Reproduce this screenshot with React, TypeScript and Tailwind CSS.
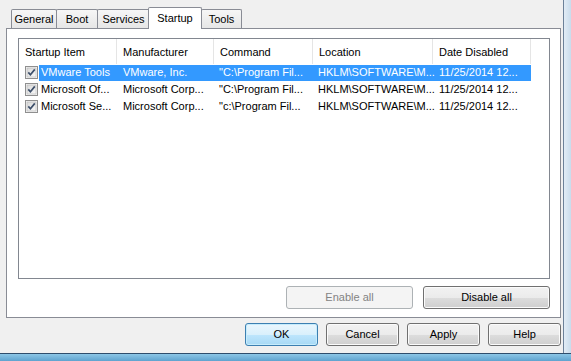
import React from "react";

const columns = [
  { title: "Startup Item", width: 98 },
  { title: "Manufacturer", width: 97 },
  { title: "Command", width: 99 },
  { title: "Location", width: 120 },
  { title: "Date Disabled", width: 98 },
];

const items = [
  {
    name: "VMware Tools",
    maker: "VMware, Inc.",
    command: '"C:\\Program Fil...',
    location: "HKLM\\SOFTWARE\\M...",
    date: "11/25/2014 12...",
    selected: true,
  },
  {
    name: "Microsoft Of...",
    maker: "Microsoft Corp...",
    command: '"C:\\Program Fil...',
    location: "HKLM\\SOFTWARE\\M...",
    date: "11/25/2014 12...",
    selected: false,
  },
  {
    name: "Microsoft Se...",
    maker: "Microsoft Corp...",
    command: '"c:\\Program Fil...',
    location: "HKLM\\SOFTWARE\\M...",
    date: "11/25/2014 12...",
    selected: false,
  },
];

function CheckBox() {
  return (
    <svg width="13" height="13" viewBox="0 0 13 13">
      <defs>
        <linearGradient id="cbg" x1="0" y1="0" x2="1" y2="1">
          <stop offset="0" stopColor="#d8d8d8" />
          <stop offset="1" stopColor="#fafafa" />
        </linearGradient>
      </defs>
      <rect x="0.5" y="0.5" width="12" height="12" fill="#f4f4f4" stroke="#8f8f8f" />
      <rect x="2" y="2" width="9" height="9" fill="url(#cbg)" stroke="#b5b5b5" strokeWidth="0.6" />
      <path d="M3.3 6.4 L5.4 8.8 L9.8 3.4" fill="none" stroke="#3d4f6a" strokeWidth="1.7" />
    </svg>
  );
}

function Tab({ label, width, selected, first }: { label: string; width: number; selected?: boolean; first?: boolean }) {
  if (selected) {
    return (
      <div
        style={{ width }}
        className="relative z-10 -mb-px -ml-[2px] flex h-[22px] items-center justify-center rounded-t-[2px] border border-b-0 border-[#898c95] bg-white pb-[1px]"
      >
        {label}
      </div>
    );
  }
  return (
    <div
      style={{ width }}
      className={`flex h-[19px] items-center justify-center rounded-t-[2px] border border-b-0 border-[#898c95] bg-[linear-gradient(#f6f6f6,#e6e6e6)] pt-[1px] ${
        first ? "" : "-ml-px"
      }`}
    >
      {label}
    </div>
  );
}

function WinButton({
  children,
  width,
  variant = "normal",
}: {
  children: React.ReactNode;
  width: number;
  variant?: "normal" | "default" | "disabled";
}) {
  const styles = {
    normal:
      "border-[#707070] bg-[linear-gradient(#f2f2f2_0%,#ebebeb_50%,#dddddd_50%,#cfcfcf_100%)] shadow-[inset_0_0_0_1px_#fbfbfb] text-black",
    default:
      "border-[#3c7fb1] bg-[linear-gradient(#eaf6fd_0%,#d9f0fc_50%,#bee6fd_50%,#a7d9f5_100%)] shadow-[inset_0_0_0_1px_#c6ecfc] text-black",
    disabled: "border-[#adb2b5] bg-[#f4f4f4] text-[#838383]",
  };
  return (
    <div
      style={{ width }}
      className={`flex h-[23px] items-center justify-center rounded-[3px] border ${styles[variant]}`}
    >
      {children}
    </div>
  );
}

export default function App() {
  return (
    <div className="flex h-[361px] w-[571px] flex-col overflow-hidden bg-[#f0f0f0] font-['Liberation_Sans',Arial,sans-serif] text-[11px] text-black">
      <div className="flex flex-1">
        <div className="flex flex-1 flex-col pl-[6px] pr-[2px] pt-[7px]">
          {/* tabs */}
          <div className="flex h-[21px] items-end pl-[5px]">
            <Tab label="General" width={46} first />
            <Tab label="Boot" width={42} />
            <Tab label="Services" width={53} />
            <Tab label="Startup" width={54} selected />
            <Tab label="Tools" width={41} />
          </div>

          {/* tab panel */}
          <div className="flex h-[290px] flex-col border border-[#898c95] bg-white pl-[11px] pr-[10px] pt-[9px]">
            <div className="flex h-[241px] flex-col border border-[#828790] bg-white">
              <div className="flex h-[25px]">
                {columns.map((c) => (
                  <div
                    key={c.title}
                    style={{ width: c.width }}
                    className="flex items-center border-r border-[#e5e5e5] pl-[6px] pt-[2px]"
                  >
                    {c.title}
                  </div>
                ))}
                <div className="flex-1" />
              </div>
              {items.map((it) => (
                <div key={it.name} className="flex h-[17px] items-center">
                  <div className="flex w-[20px] items-center pl-[6px]">
                    <CheckBox />
                  </div>
                  <div
                    className={`flex h-[16px] items-center whitespace-nowrap ${
                      it.selected ? "bg-[#3399ff] text-white" : ""
                    }`}
                  >
                    <div className="w-[78px] pl-[2px]">{it.name}</div>
                    <div className="w-[97px] pl-[6px]">{it.maker}</div>
                    <div className="w-[99px] pl-[5px]">{it.command}</div>
                    <div className="w-[120px] pl-[5px]">{it.location}</div>
                    <div className="w-[98px] pl-[6px]">{it.date}</div>
                  </div>
                </div>
              ))}
            </div>
            <div className="mt-[7px] flex justify-end gap-[10px]">
              <WinButton width={127} variant="disabled">
                Enable all
              </WinButton>
              <WinButton width={127}>Disable all</WinButton>
            </div>
          </div>

          {/* dialog buttons */}
          <div className="mt-[5px] flex justify-end gap-[8px]">
            <WinButton width={73} variant="default">
              OK
            </WinButton>
            <WinButton width={73}>Cancel</WinButton>
            <WinButton width={73}>Apply</WinButton>
            <WinButton width={73}>Help</WinButton>
          </div>
        </div>
        <div className="w-[8px] border-l border-[#6c8199] bg-[linear-gradient(90deg,#e2ecf5,#c9dcec)]" />
      </div>
      <div className="h-[8px] border-t border-[#2e4d6c] bg-[linear-gradient(#8cc6e6,#5fa3cf)]" />
    </div>
  );
}
